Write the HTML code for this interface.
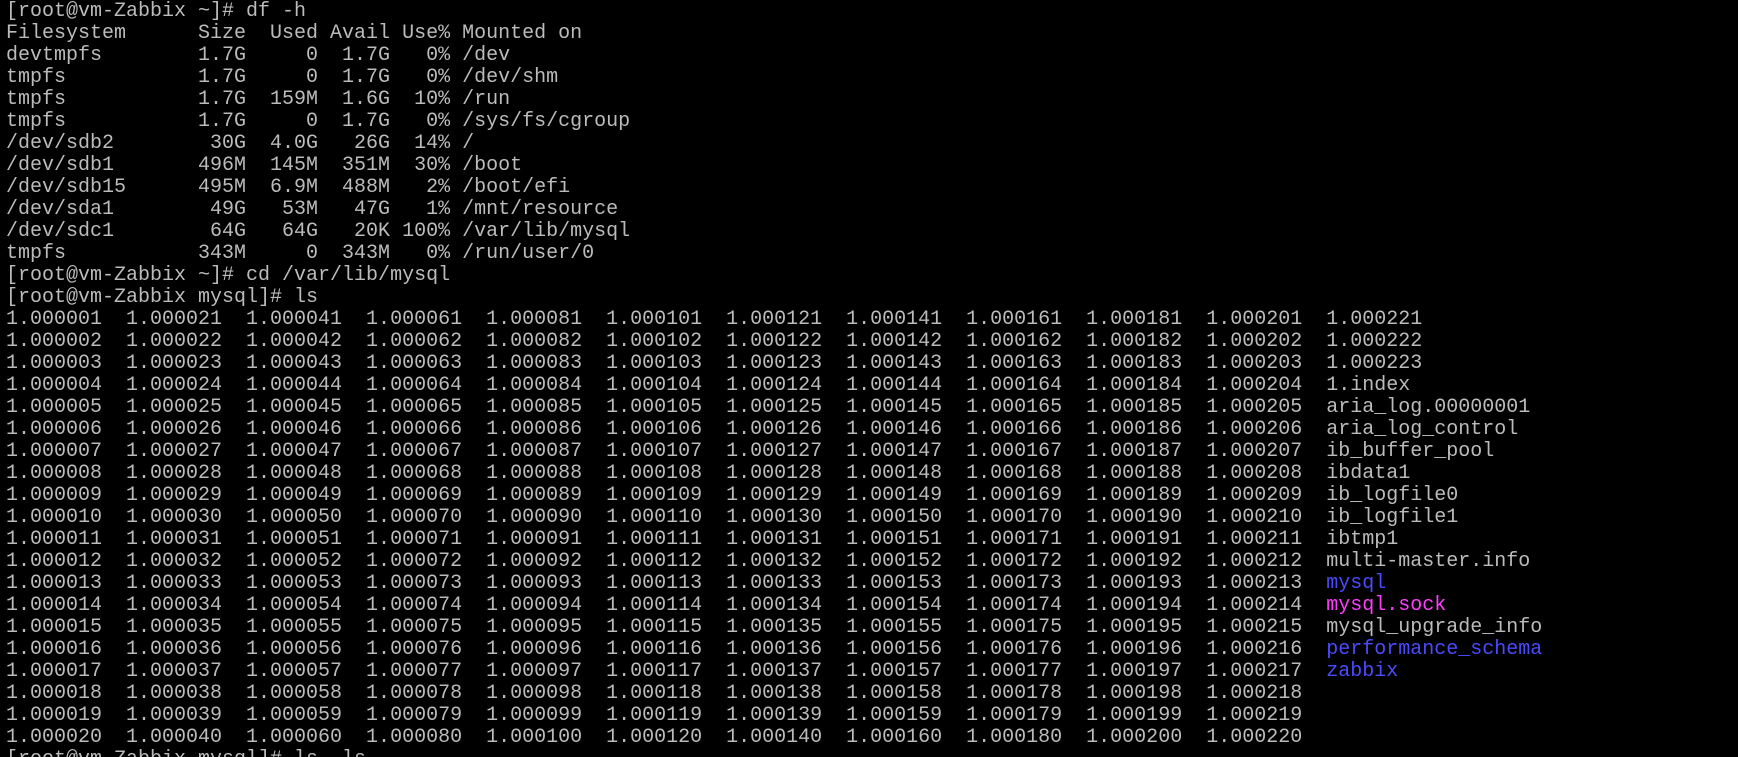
<!DOCTYPE html>
<html><head><meta charset="utf-8"><style>
html,body{margin:0;padding:0;background:#000;width:1738px;height:757px;overflow:hidden}
pre{margin:0;padding:1px 0 0 6px;font-family:"Liberation Mono",monospace;font-size:20px;line-height:22px;color:#bbbbbb;white-space:pre}
.b{color:#4a4aff}.m{color:#ff3cff}
</style></head><body><pre>[root@vm-Zabbix ~]# df -h
Filesystem      Size  Used Avail Use% Mounted on
devtmpfs        1.7G     0  1.7G   0% /dev
tmpfs           1.7G     0  1.7G   0% /dev/shm
tmpfs           1.7G  159M  1.6G  10% /run
tmpfs           1.7G     0  1.7G   0% /sys/fs/cgroup
/dev/sdb2        30G  4.0G   26G  14% /
/dev/sdb1       496M  145M  351M  30% /boot
/dev/sdb15      495M  6.9M  488M   2% /boot/efi
/dev/sda1        49G   53M   47G   1% /mnt/resource
/dev/sdc1        64G   64G   20K 100% /var/lib/mysql
tmpfs           343M     0  343M   0% /run/user/0
[root@vm-Zabbix ~]# cd /var/lib/mysql
[root@vm-Zabbix mysql]# ls
1.000001  1.000021  1.000041  1.000061  1.000081  1.000101  1.000121  1.000141  1.000161  1.000181  1.000201  1.000221
1.000002  1.000022  1.000042  1.000062  1.000082  1.000102  1.000122  1.000142  1.000162  1.000182  1.000202  1.000222
1.000003  1.000023  1.000043  1.000063  1.000083  1.000103  1.000123  1.000143  1.000163  1.000183  1.000203  1.000223
1.000004  1.000024  1.000044  1.000064  1.000084  1.000104  1.000124  1.000144  1.000164  1.000184  1.000204  1.index
1.000005  1.000025  1.000045  1.000065  1.000085  1.000105  1.000125  1.000145  1.000165  1.000185  1.000205  aria_log.00000001
1.000006  1.000026  1.000046  1.000066  1.000086  1.000106  1.000126  1.000146  1.000166  1.000186  1.000206  aria_log_control
1.000007  1.000027  1.000047  1.000067  1.000087  1.000107  1.000127  1.000147  1.000167  1.000187  1.000207  ib_buffer_pool
1.000008  1.000028  1.000048  1.000068  1.000088  1.000108  1.000128  1.000148  1.000168  1.000188  1.000208  ibdata1
1.000009  1.000029  1.000049  1.000069  1.000089  1.000109  1.000129  1.000149  1.000169  1.000189  1.000209  ib_logfile0
1.000010  1.000030  1.000050  1.000070  1.000090  1.000110  1.000130  1.000150  1.000170  1.000190  1.000210  ib_logfile1
1.000011  1.000031  1.000051  1.000071  1.000091  1.000111  1.000131  1.000151  1.000171  1.000191  1.000211  ibtmp1
1.000012  1.000032  1.000052  1.000072  1.000092  1.000112  1.000132  1.000152  1.000172  1.000192  1.000212  multi-master.info
1.000013  1.000033  1.000053  1.000073  1.000093  1.000113  1.000133  1.000153  1.000173  1.000193  1.000213  <span class="b">mysql</span>
1.000014  1.000034  1.000054  1.000074  1.000094  1.000114  1.000134  1.000154  1.000174  1.000194  1.000214  <span class="m">mysql.sock</span>
1.000015  1.000035  1.000055  1.000075  1.000095  1.000115  1.000135  1.000155  1.000175  1.000195  1.000215  mysql_upgrade_info
1.000016  1.000036  1.000056  1.000076  1.000096  1.000116  1.000136  1.000156  1.000176  1.000196  1.000216  <span class="b">performance_schema</span>
1.000017  1.000037  1.000057  1.000077  1.000097  1.000117  1.000137  1.000157  1.000177  1.000197  1.000217  <span class="b">zabbix</span>
1.000018  1.000038  1.000058  1.000078  1.000098  1.000118  1.000138  1.000158  1.000178  1.000198  1.000218
1.000019  1.000039  1.000059  1.000079  1.000099  1.000119  1.000139  1.000159  1.000179  1.000199  1.000219
1.000020  1.000040  1.000060  1.000080  1.000100  1.000120  1.000140  1.000160  1.000180  1.000200  1.000220
[root@vm-Zabbix mysql]# ls -ls</pre></body></html>
